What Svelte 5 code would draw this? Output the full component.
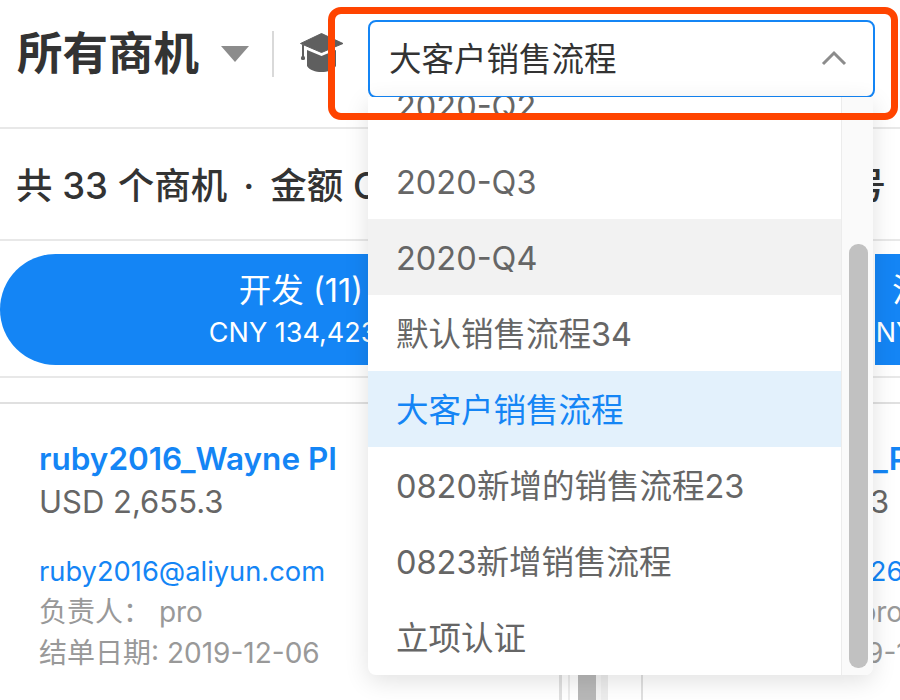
<script>
  const options = [
    { label: '2020-Q3' },
    { label: '2020-Q4', state: 'hover' },
    { label: '默认销售流程34' },
    { label: '大客户销售流程', state: 'selected' },
    { label: '0820新增的销售流程23' },
    { label: '0823新增销售流程' },
    { label: '立项认证' }
  ];
</script>

<div class="page">
  <header class="top">
    <h1>所有商机</h1>
    <span class="caret"></span>
    <span class="vline"></span>
    <svg class="cap" viewBox="0 0 44 40" width="44" height="40" aria-hidden="true">
      <path d="M21.5 0.5 L43 10.5 L21.5 19.5 L0.5 10.5 Z" fill="#5f5f5f" stroke="#5f5f5f" stroke-linejoin="round" />
      <path d="M7 17 L21.5 23 L36 17 V33 C31 41 12 41 7 33 Z" fill="#5f5f5f" />
      <rect x="2" y="12" width="2" height="13" fill="#5f5f5f" />
      <rect x="1" y="23" width="4" height="4" rx="1.5" fill="#5f5f5f" />
    </svg>
  </header>

  <section class="stats">
    <span>共 33 个商机<span class="dot">·</span>金额 CNY 134,423</span>
    <span class="stats-end">号</span>
  </section>

  <nav class="tabs">
    <div class="tab first">
      <div class="tab-title">开发 (11)</div>
      <div class="tab-sub">CNY 134,423.1</div>
    </div>
    <div class="tab second">
      <div class="tab-title">洽谈 (8)</div>
      <div class="tab-sub">CNY 50,000</div>
    </div>
  </nav>

  <div class="gap"></div>

  <main class="board">
    <article class="card left">
      <a class="name" href="#a">ruby2016_Wayne PI</a>
      <div class="amount">USD 2,655.3</div>
      <a class="mail" href="#a">ruby2016@aliyun.com</a>
      <div class="meta">负责人：&nbsp;pro</div>
      <div class="meta">结单日期: 2019-12-06</div>
    </article>
    <div class="rail">
      <span class="bar"></span>
    </div>
    <article class="card right">
      <a class="name" href="#a">ruby2016ab_PI</a>
      <div class="amount">USD 12,655.3</div>
      <a class="mail" href="#a">ruby2016ruby2616@aliyun.com</a>
      <div class="meta">负责人：&nbsp;&nbsp;&nbsp;&nbsp;&nbsp;&nbsp;&nbsp;pro</div>
      <div class="meta">结单日期: 2019-12-06</div>
    </article>
  </main>

  <div class="select">
    <span>大客户销售流程</span>
    <svg viewBox="0 0 26 16" width="26" height="16" aria-hidden="true">
      <path d="M2 14 L13 3 L24 14" fill="none" stroke="#8c8c8c" stroke-width="3" />
    </svg>
  </div>

  <div class="dropdown">
    <div class="list">
      <div class="clipped">2020-Q2</div>
      {#each options as o}
        <div class="option {o.state ?? ''}">{o.label}</div>
      {/each}
    </div>
    <div class="track"><span class="thumb"></span></div>
  </div>

  <div class="marker"></div>
</div>

<style>
  :global(body) {
    margin: 0;
    background: #fff;
  }
  .page {
    position: relative;
    width: 900px;
    height: 700px;
    overflow: hidden;
    background: #fff;
    font-family: Inter, "Noto Sans CJK SC", sans-serif;
    color: #333;
  }
  .top {
    box-sizing: border-box;
    height: 129px;
    padding: 24px 0 0 17px;
    display: flex;
    align-items: flex-start;
    border-bottom: 2px solid #e8e8e8;
  }
  h1 {
    margin: 0;
    font-size: 45.5px;
    line-height: 60px;
    font-weight: 700;
    color: #333;
  }
  .caret {
    margin: 22px 0 0 22px;
    width: 0;
    height: 0;
    border-left: 14px solid transparent;
    border-right: 14px solid transparent;
    border-top: 16px solid #8c8c8c;
  }
  .vline {
    margin: 7px 0 0 23px;
    width: 2px;
    height: 46px;
    background: #d9d9d9;
  }
  .cap {
    margin: 9px 0 0 26px;
  }
  .stats {
    box-sizing: border-box;
    height: 112px;
    padding: 0 14px 1px 16px;
    display: flex;
    justify-content: space-between;
    align-items: center;
    font-size: 36.5px;
    font-weight: 500;
    white-space: nowrap;
    border-bottom: 2px solid #e8e8e8;
    overflow: hidden;
  }
  .dot {
    margin: 0 16px;
  }
  .tabs {
    box-sizing: border-box;
    height: 137px;
    padding-top: 13px;
    display: flex;
    border-bottom: 2px solid #e8e8e8;
    overflow: hidden;
  }
  .tab {
    box-sizing: border-box;
    height: 111px;
    padding-top: 14px;
    background: #1485f5;
    color: #fff;
    flex: none;
  }
  .first {
    width: 602px;
    text-align: center;
    border-radius: 56px 0 0 56px;
  }
  .second {
    width: 300px;
    margin-left: 273px;
    padding-left: 17px;
  }
  .second .tab-sub {
    margin-left: -36px;
  }
  .tab-title {
    font-size: 32.5px;
    line-height: 46px;
  }
  .tab-sub {
    font-size: 27px;
    line-height: 38px;
  }
  .gap {
    height: 24px;
    border-bottom: 2px solid #e0e0e0;
  }
  .board {
    display: flex;
    height: 296px;
  }
  .card {
    box-sizing: border-box;
    padding: 37px 0 0 39px;
    white-space: nowrap;
    overflow: hidden;
  }
  .left {
    width: 559px;
  }
  .right {
    flex: 1;
    padding-left: 49px;
    border-left: 2px solid #e0e0e0;
  }
  .rail {
    width: 82px;
    border-left: 3px solid #e0e0e0;
    box-sizing: border-box;
    padding-left: 16px;
  }
  .bar {
    display: block;
    width: 18px;
    height: 100%;
    background: #b8b8b8;
    box-shadow: -8px 0 0 #fff, -10px 0 0 #ececec, 5px 0 0 #f4f4f4, 12px 0 0 #ececec;
  }
  .name,
  .mail {
    display: block;
    color: #1485f5;
    text-decoration: none;
  }
  .name {
    font-size: 31.5px;
    line-height: 36px;
    font-weight: 600;
  }
  .amount {
    font-size: 31px;
    line-height: 42px;
    margin-top: 4px;
    color: #666;
    margin-bottom: 28px;
  }
  .mail {
    font-size: 27.3px;
    line-height: 41px;
  }
  .meta {
    font-size: 28px;
    line-height: 41px;
    color: #999;
  }
  .select {
    position: absolute;
    left: 368px;
    top: 20px;
    box-sizing: border-box;
    width: 507px;
    height: 78px;
    padding: 0 26px 5px 19px;
    display: flex;
    align-items: center;
    justify-content: space-between;
    background: #fff;
    border: 2px solid #1485f5;
    border-radius: 8px;
    font-size: 32.5px;
    color: #333;
  }
  .select svg {
    margin-top: 3px;
  }
  .dropdown {
    position: absolute;
    left: 368px;
    top: 97px;
    width: 505px;
    height: 578px;
    display: flex;
    background: #fff;
    border-radius: 0 0 8px 8px;
    box-shadow: 0 6px 24px rgba(0, 0, 0, 0.12);
    overflow: hidden;
  }
  .list {
    width: 473px;
    flex: none;
    font-size: 32.5px;
    color: #666;
  }
  .clipped {
    height: 46px;
    padding-left: 28px;
    line-height: 20px;
  }
  .option {
    box-sizing: border-box;
    height: 76px;
    line-height: 80px;
    padding-left: 28px;
  }
  .hover {
    background: #f2f2f2;
  }
  .selected {
    background: #e3f1fc;
    color: #1485f5;
  }
  .track {
    flex: 1;
    background: #fafafa;
    border-left: 1px solid #ececec;
    padding-top: 147px;
    box-sizing: border-box;
  }
  .thumb {
    display: block;
    width: 19px;
    height: 424px;
    margin-left: 7px;
    border-radius: 9px;
    background: #c1c1c1;
  }
  .marker {
    position: absolute;
    left: 328px;
    top: 7px;
    box-sizing: border-box;
    width: 570px;
    height: 113px;
    border: 7px solid #ff4400;
    border-radius: 13px;
  }
</style>
